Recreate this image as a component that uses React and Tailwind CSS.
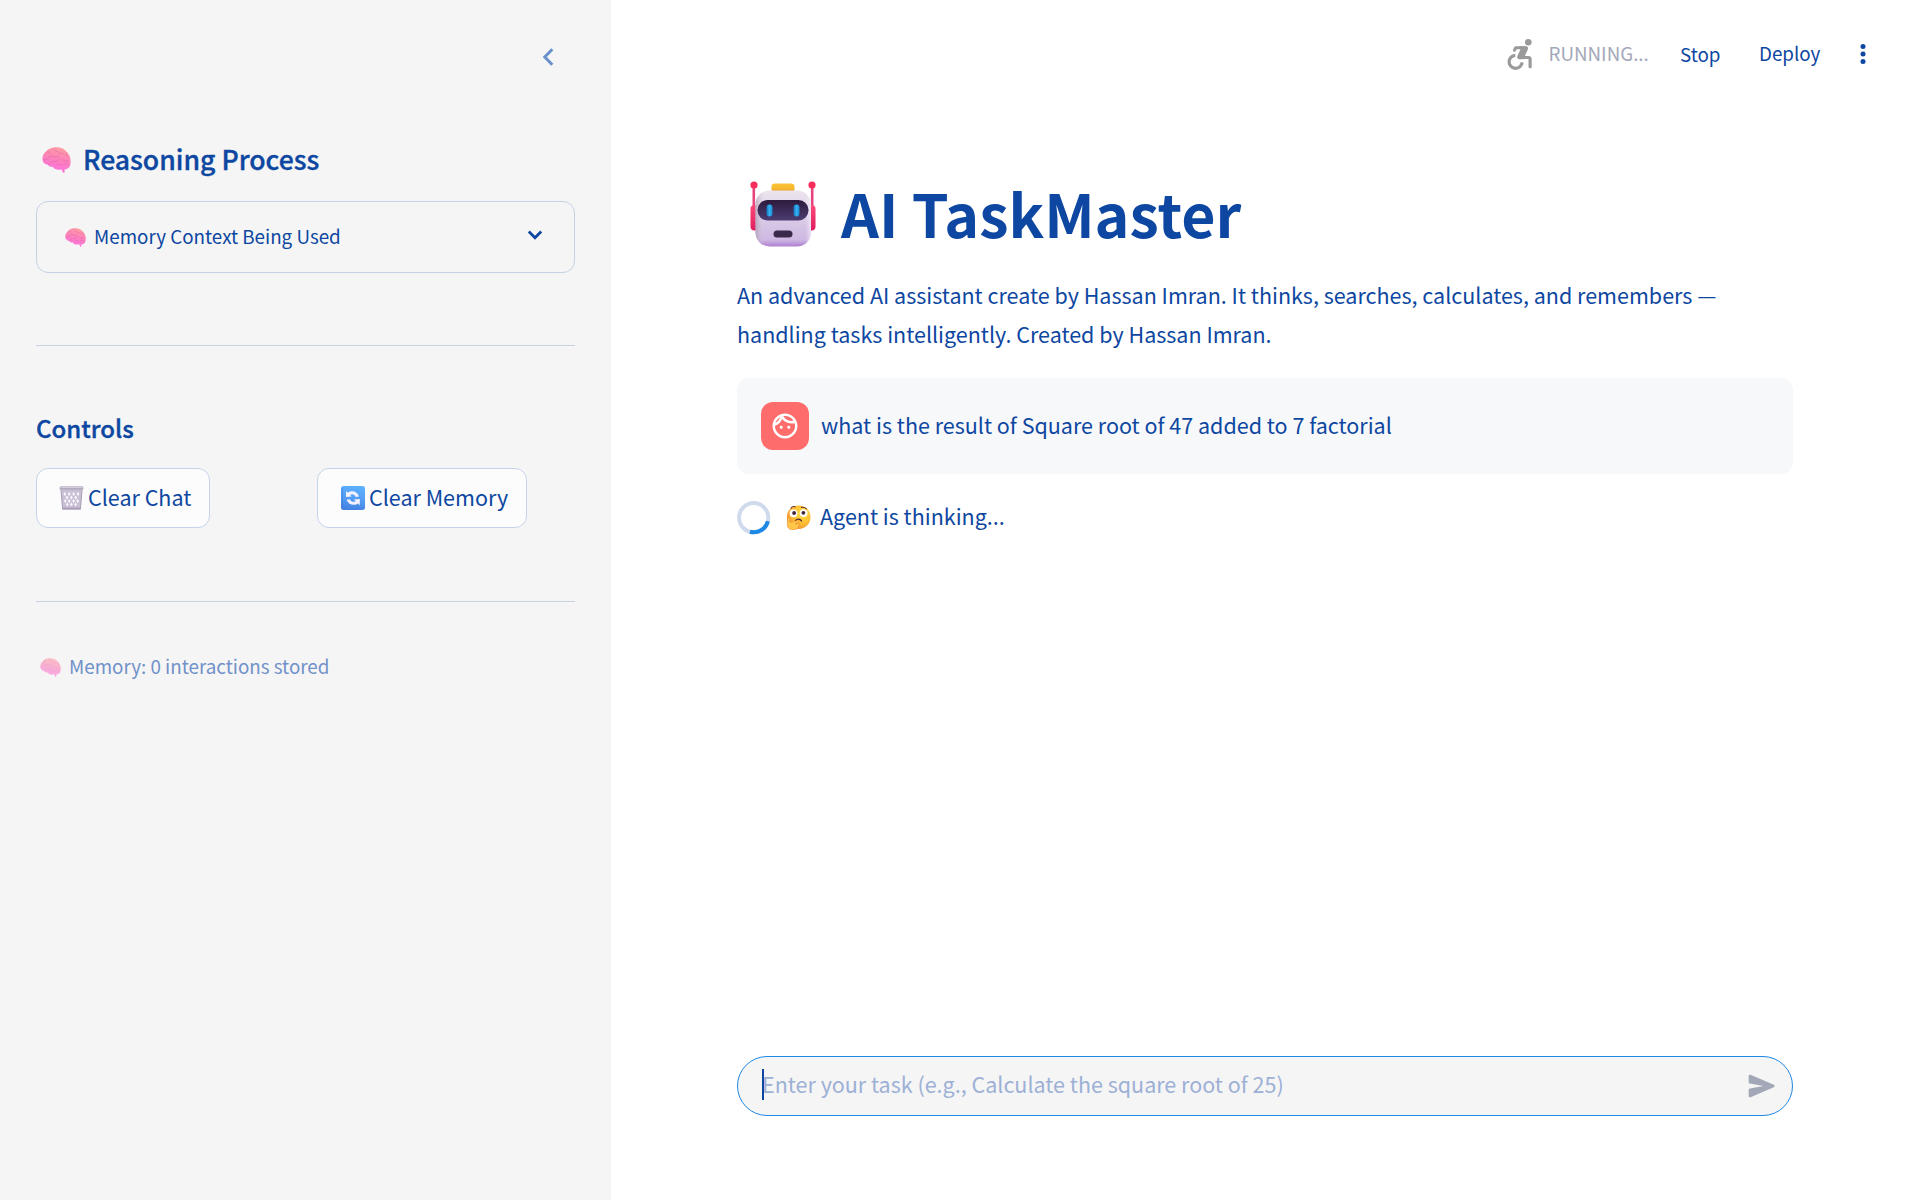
import React from 'react';

function Brain({ className, id }) {
  return (
    <svg viewBox="0 0 30 27" className={className} aria-hidden="true">
      <defs>
        <linearGradient id={id} x1="0.6" y1="0" x2="0.35" y2="1">
          <stop offset="0" stopColor="#ff9fa3" />
          <stop offset="0.45" stopColor="#fb82ba" />
          <stop offset="1" stopColor="#ff6fe6" />
        </linearGradient>
      </defs>
      <path
        d="M13 .4C18-.5 23.500 1.500 26 5.500c3 3 4.300 7.500 3.400 12.500-.4 3.600-2.900 5.200-5.900 5.200l-.2 3.200c0 .5-1.500.5-1.700 0l-1.200-3.100c-4.200.8-7.800 0-9.300-2.800-2.400.4-4-.3-4.900-2C2.300 18 .3 15.500.5 12.500.3 9.500 1.600 6.500 4 5 5.700 2 9.500.3 13 .4z"
        fill={`url(#${id})`}
      />
      <g fill="none" stroke="#e0589f" strokeWidth="0.9" strokeLinecap="round" opacity="0.5">
        <path d="M4 5.500c2-.9 3.500-.5 4.500.7M13 .9c-1 1.800-.3 3.200 1.700 3.400 1.500 0 3 .8 3.300 2.400M18.500 6.500c2-.4 3.800.2 4.800 1.700M25.500 6c-1 1.500-.5 3 1 3.600" />
        <path d="M1.500 13c3 .9 5-.5 5.500-2.500 1.500-1.500 4-1.500 5.500-.5 2 1 4 .3 5-1M6.500 18.300c1.200-2.300 3-3.500 5.500-3.200 3 0 5-.8 6-2.800M15 18c2-.6 3.600-.2 5 1M21 13c1.500 1.500 3.500 2 5.800 1.200M22 18.500c1.300-.9 3-1 4.500-.4" />
      </g>
    </svg>
  );
}

function Robot() {
  return (
    <svg viewBox="0 0 66 66" className="mt-[4px] ml-[12.5px] h-[66px] w-[66px] shrink-0" aria-hidden="true">
      <defs>
        <linearGradient id="robotHead" x1="0" y1="0" x2="0" y2="1">
          <stop offset="0" stopColor="#ede5ee" />
          <stop offset="0.7" stopColor="#d3c1e4" />
          <stop offset="0.88" stopColor="#ceb8e2" />
          <stop offset="1" stopColor="#b07fd2" />
        </linearGradient>
        <linearGradient id="robotShade" x1="0" y1="0" x2="1" y2="0">
          <stop offset="0" stopColor="#a895a8" stopOpacity="0.65" />
          <stop offset="0.15" stopColor="#d8cbdc" stopOpacity="0" />
          <stop offset="0.9" stopColor="#f4eef8" stopOpacity="0" />
          <stop offset="1" stopColor="#fbf6ff" stopOpacity="0.6" />
        </linearGradient>
        <linearGradient id="robotVisor" x1="0" y1="0" x2="0" y2="1">
          <stop offset="0" stopColor="#2d1a3c" />
          <stop offset="1" stopColor="#4a3d72" />
        </linearGradient>
        <linearGradient id="robotHat" x1="0" y1="0" x2="0" y2="1">
          <stop offset="0" stopColor="#fcc43a" />
          <stop offset="0.6" stopColor="#f6b72c" />
          <stop offset="1" stopColor="#d9872b" />
        </linearGradient>
        <linearGradient id="robotEar" x1="0" y1="0" x2="0" y2="1">
          <stop offset="0" stopColor="#fb4a78" />
          <stop offset="1" stopColor="#e01c5e" />
        </linearGradient>
        <linearGradient id="robotEye" x1="0" y1="0" x2="1" y2="0">
          <stop offset="0" stopColor="#1673bb" />
          <stop offset="0.5" stopColor="#33b2f3" />
          <stop offset="1" stopColor="#1b87d0" />
        </linearGradient>
      </defs>
      <path d="M2.500 5h2.600v20H2.500zM60.900 5h2.600v20h-2.600z" fill="#e8457f" />
      <circle cx="4" cy="4" r="3.600" fill="#f72d5e" />
      <circle cx="62" cy="4" r="3.600" fill="#f72d5e" />
      <rect x="0.500" y="24" width="9" height="25.500" rx="4" fill="url(#robotEar)" />
      <rect x="56.500" y="24" width="9" height="25.500" rx="4" fill="url(#robotEar)" />
      <rect x="21.500" y="2.500" width="23" height="9" rx="3.300" fill="url(#robotHat)" />
      <rect x="5.500" y="9.500" width="55.500" height="56" rx="14" fill="url(#robotHead)" />
      <rect x="5.500" y="9.500" width="55.500" height="56" rx="14" fill="url(#robotShade)" />
      <rect x="7.500" y="19" width="51" height="20.500" rx="10" fill="url(#robotVisor)" />
      <rect x="16.500" y="23.500" width="6" height="12" rx="3" fill="url(#robotEye)" />
      <rect x="43.500" y="23.500" width="6" height="12" rx="3" fill="url(#robotEye)" />
      <rect x="23.500" y="49.500" width="19" height="7" rx="3.500" fill="#3a2948" />
    </svg>
  );
}

function Wastebasket() {
  return (
    <svg viewBox="0 0 25 24" className="h-[24px] w-[25px] shrink-0" aria-hidden="true">
      <path d="M1.800 3h21.400l-1.700 19H3.500z" fill="#c9c0d6" />
      <g fill="#fbfafd">
        <path d="M5.800 6l1.300 2-1.300 2-1.300-2zM10.200 6l1.300 2-1.300 2-1.300-2zM14.600 6l1.300 2-1.300 2-1.300-2zM19 6l1.300 2L19 10l-1.300-2z" />
        <path d="M8 9.500l1.300 2L8 13.500l-1.300-2zM12.400 9.500l1.300 2-1.300 2-1.300-2zM16.800 9.500l1.300 2-1.300 2-1.300-2z" />
        <path d="M6.200 13l1.200 2-1.200 2-1.200-2zM10.200 13l1.300 2-1.300 2-1.300-2zM14.600 13l1.300 2-1.300 2-1.300-2zM18.600 13l1.300 2-1.300 2-1.300-2z" />
        <path d="M8.300 16.500l1.200 2-1.200 1.800-1.200-1.800zM12.400 16.500l1.300 2-1.300 1.800-1.300-1.800zM16.600 16.500l1.200 2-1.200 1.800-1.200-1.800z" />
      </g>
      <path d="M2 4l1.500 18M23 4l-1.500 18" stroke="#a79fb5" strokeWidth="1" />
      <rect x="0.500" y="0.200" width="24" height="3.600" rx="1.600" fill="#b5abc0" />
      <rect x="1.500" y="0.800" width="22" height="1.200" rx="0.600" fill="#d3ccda" />
      <rect x="3" y="21.500" width="19" height="2.300" rx="0.800" fill="#aaa0ba" />
    </svg>
  );
}

function RefreshTile() {
  return (
    <svg viewBox="0 0 24 24" className="h-[24px] w-[24px] shrink-0" aria-hidden="true">
      <defs>
        <linearGradient id="tile" x1="0.600" y1="0" x2="0.400" y2="1">
          <stop offset="0" stopColor="#5cb0ff" />
          <stop offset="0.550" stopColor="#539cf4" />
          <stop offset="1" stopColor="#4380e0" />
        </linearGradient>
      </defs>
      <rect width="24" height="24" rx="2.600" fill="url(#tile)" />
      <path d="M1.200 2.500v19" stroke="#3f7fdc" strokeWidth="1" opacity="0.700" />
      <g fill="#f4f1ff">
        <path d="M5 5l1.900 1.700C10.500 4 16 5 18 10.400l-3.200.5c-1.300-2.600-3.600-3.300-5.600-2l1.500 1.700L5 11z" />
        <path d="M18.800 19.200l-1.900-1.800c-3.600 2.700-9.300 1.700-11.300-3.700l3.300-.5c1.300 2.600 3.700 3.300 5.700 2l-1.600-1.700 5.800-.4z" />
      </g>
    </svg>
  );
}

function ThinkingFace() {
  return (
    <svg viewBox="0 0 25 25" className="h-[25px] w-[25px] shrink-0" aria-hidden="true">
      <defs>
        <radialGradient id="face" cx="0.650" cy="0.350" r="0.750">
          <stop offset="0" stopColor="#ffdf44" />
          <stop offset="0.600" stopColor="#fdbb32" />
          <stop offset="1" stopColor="#ee8238" />
        </radialGradient>
      </defs>
      <circle cx="12.700" cy="12.200" r="11.800" fill="url(#face)" />
      <circle cx="7.500" cy="8.300" r="3.900" fill="#fff" />
      <circle cx="17.600" cy="8.100" r="3.900" fill="#fff" />
      <circle cx="8.100" cy="8" r="1.900" fill="#432437" />
      <circle cx="17.400" cy="7.800" r="1.900" fill="#432437" />
      <path d="M5 3.100c1.200-1.500 2.700-1.800 4.200-1.300M15.500 2.400c1.900-.4 3.600.1 4.900 1.400" stroke="#5c2f35" strokeWidth="1.100" fill="none" strokeLinecap="round" />
      <path d="M9.500 15.600c1.500-2 4.700-2 6 .4" stroke="#4f2338" strokeWidth="1.300" fill="none" strokeLinecap="round" />
      <path d="M1.600 13.700c.8-1.400 2.100-1 2.200.5l.2 3 7.700-1.700c1.600-.3 2 1.500.6 2l-3.100 1.200 3.400-.1c1.200 0 1.200 1.500.2 1.800.6.500.2 1.400-.6 1.600.1 1.800-2.300 2.800-5.500 2.700-4 0-5.600-2.500-5.300-5.700z" fill="#ffc64a" stroke="#e98a35" strokeWidth="0.600" />
    </svg>
  );
}

function WheelchairIcon() {
  return (
    <svg viewBox="0 0 25 31" className="h-[31px] w-[25px] shrink-0" fill="none" stroke="#9a9a9a" strokeLinecap="round" strokeLinejoin="round" aria-hidden="true">
      <circle cx="21.300" cy="3.300" r="3.300" fill="#9a9a9a" stroke="none" />
      <path d="M7.500 11.200l1.200-2.500h9" strokeWidth="3" />
      <path d="M12 7.300h7.300c1.600.2 2.200 1.600 1.600 2.900l-3.600 8-1 2H12c-1.700-.4-2.200-1.800-1.600-3.200l3.200-7z" fill="#9a9a9a" stroke="none" />
      <path d="M13 18.500h8.300c1.100 0 1.800.7 1.800 1.800v7.400" strokeWidth="3.200" />
      <path d="M8.300 16.400a6.500 6.500 0 1 0 6.800 6.900" strokeWidth="3.200" strokeLinecap="butt" />
    </svg>
  );
}

function Sidebar() {
  return (
    <aside className="flex h-full w-[611px] shrink-0 flex-col bg-[#f5f5f5] px-9">
      <div className="flex h-[137px] justify-end pt-[47px] pr-[21px]">
        <svg viewBox="0 0 12 20" className="h-5 w-3" fill="none" stroke="#6a90cb" strokeWidth="3" aria-hidden="true">
          <path d="M10.300 2.300L2.800 10l7.500 7.700" />
        </svg>
      </div>

      <h2 className="flex h-11 items-center pl-[6px] text-[26.600px] leading-[44px] font-medium whitespace-nowrap [-webkit-text-stroke:0.35px_#0d47a1]">
        <Brain id="brainLarge" className="mt-[2px] mr-[12px] h-[26px] w-[29px]" />
        Reasoning Process
      </h2>

      <div className="mt-[20px] flex h-[72px] items-center rounded-xl border border-[#c5d2e6] pr-[31px] pl-7">
        <Brain id="brainSmall" className="h-[19px] w-[21px]" />
        <span className="-mt-[2px] ml-2 flex-1 text-[18.800px] leading-8">Memory Context Being Used</span>
        <svg viewBox="0 0 16 10" className="-mt-[4px] h-[10px] w-4" fill="none" stroke="#0d47a1" strokeWidth="2.800" aria-hidden="true">
          <path d="M1.800 1.600L8 7.800l6.200-6.200" />
        </svg>
      </div>

      <hr className="mt-[72px] border-t border-[#c8d0e2]" />

      <h3 className="mt-16 h-9 text-[24px] leading-9 font-medium [-webkit-text-stroke:0.35px_#0d47a1]">Controls</h3>

      <div className="mt-[22px] grid grid-cols-[281px_1fr] text-[21.500px]">
        <button className="flex h-[60px] w-[174px] items-center rounded-xl border border-[#c5d4ea] bg-[#fcfcfc] pl-[22px] whitespace-nowrap">
          <Wastebasket />
          <span className="-mt-[3px] ml-1 leading-9">Clear Chat</span>
        </button>
        <button className="flex h-[60px] w-[210px] items-center rounded-xl border border-[#c5d4ea] bg-[#fcfcfc] pl-[23px] whitespace-nowrap">
          <RefreshTile />
          <span className="-mt-[3px] ml-1 leading-9">Clear Memory</span>
        </button>
      </div>

      <hr className="mt-[73px] border-t border-[#c8d0e2]" />

      <p className="mt-12 flex h-8 items-center pl-1 text-[18.800px] leading-8 text-[#7191c9]">
        <Brain id="brainFaded" className="mt-[3px] mr-2 h-[19px] w-[21px] opacity-60" />
        Memory: 0 interactions stored
      </p>
    </aside>
  );
}

function TopBar() {
  return (
    <header className="flex h-[108px] items-center justify-end pr-[54px] text-[18.800px] leading-8 whitespace-nowrap">
      <WheelchairIcon />
      <span className="-mt-[2px] ml-[17px] w-[131.500px] text-[#a3a8b8]">RUNNING...</span>
      <span className="w-[79px]">Stop</span>
      <span className="-mt-[2px] w-[101px]">Deploy</span>
      <svg viewBox="0 0 6 20" className="h-5 w-[6px]" fill="#0d47a1" aria-hidden="true">
        <circle cx="3" cy="2.500" r="2.500" />
        <circle cx="3" cy="10" r="2.500" />
        <circle cx="3" cy="17.500" r="2.500" />
      </svg>
    </header>
  );
}

export default function App() {
  return (
    <div className="flex h-[1200px] w-[1920px] overflow-hidden bg-white font-['Noto_Sans_CJK_SC','Noto_Sans',sans-serif] text-[#0d47a1]">
      <Sidebar />
      <div className="flex min-w-0 flex-1 flex-col">
        <TopBar />
        <main className="flex flex-1 flex-col pr-[127px] pl-[126px] text-[21.500px]">
          <h1 className="mt-[64px] flex h-20 items-center text-[59.100px] leading-[80px] font-bold">
            <Robot />
            <span className="ml-[25.5px]">AI TaskMaster</span>
          </h1>
          <p className="mt-[23px] leading-[39px] whitespace-nowrap">
            An advanced AI assistant create by Hassan Imran. It thinks, searches, calculates, and remembers —
            <br />
            handling tasks intelligently. Created by Hassan Imran.
          </p>

          <div className="mt-[25px] flex h-24 items-center rounded-xl bg-[#f7f8fa] pl-6">
            <div className="flex h-12 w-12 items-center justify-center rounded-xl bg-[#ff6c6c]">
              <svg viewBox="0 0 24 24" className="h-[30px] w-[30px]" fill="#fff" aria-hidden="true">
                <path d="M10.250 13c0 .690-.560 1.250-1.250 1.250S7.750 13.690 7.750 13s.560-1.250 1.250-1.250 1.250.560 1.250 1.250zM15 11.750c-.690 0-1.250.560-1.250 1.250s.560 1.250 1.250 1.250 1.250-.560 1.250-1.250-.560-1.250-1.250-1.250zm7 .250c0 5.520-4.480 10-10 10S2 17.520 2 12 6.480 2 12 2s10 4.480 10 10zM10.660 4.120C12.060 6.440 14.600 8 17.500 8c.460 0 .910-.050 1.340-.120C17.440 5.560 14.900 4 12 4c-.460 0-.910.050-1.340.120zM4.420 9.470c1.710-.970 3.030-2.550 3.660-4.440C6.370 6 5.050 7.580 4.420 9.470zM20 12c0-.780-.120-1.530-.330-2.240-.700.150-1.420.240-2.170.240-3.130 0-5.920-1.440-7.760-3.690C8.690 8.870 6.600 10.880 4 11.860c.010.040 0 .090 0 .140 0 4.410 3.590 8 8 8s8-3.590 8-8z" />
              </svg>
            </div>
            <span className="-mt-[3px] ml-3 leading-9">what is the result of Square root of 47 added to 7 factorial</span>
          </div>

          <div className="mt-[25px] flex h-[36px] items-center">
            <svg viewBox="0 0 34 34" className="mt-[2px] h-[34px] w-[34px]" fill="none" strokeWidth="4" aria-hidden="true">
              <circle cx="16.700" cy="16.700" r="14.600" stroke="#cfdaec" />
              <path d="M30.900 20.200A14.600 14.600 0 0 1 12.900 30.800" stroke="#1e88e5" />
            </svg>
            <span className="mr-[9px] ml-[15px]">
              <ThinkingFace />
            </span>
            <span className="-mt-[3px] leading-9">Agent is thinking...</span>
          </div>

          <div className="mt-auto mb-[84px] flex h-[60px] items-center rounded-full border border-[#1e88e5] bg-[#f5f5f5] pr-[14px] pl-6">
            <span className="h-[31px] w-[2px] -translate-y-[2px] bg-[#0d47a1]" />
            <span className="-mt-[5px] -ml-[2px] flex-1 leading-9 text-[#9db0d6]">Enter your task (e.g., Calculate the square root of 25)</span>
            <svg viewBox="0 0 24 24" className="h-[32px] w-[32px]" fill="#a3a8b8" aria-hidden="true">
              <path d="M3.400 20.400l17.450-7.480c.810-.350.810-1.490 0-1.840L3.400 3.600c-.660-.290-1.390.200-1.390.910L2 9.120c0 .500.370.930.870.990L13 12 2.870 13.880c-.500.070-.870.500-.870 1l.010 4.610c0 .710.730 1.200 1.390.910z" />
            </svg>
          </div>
        </main>
      </div>
    </div>
  );
}
